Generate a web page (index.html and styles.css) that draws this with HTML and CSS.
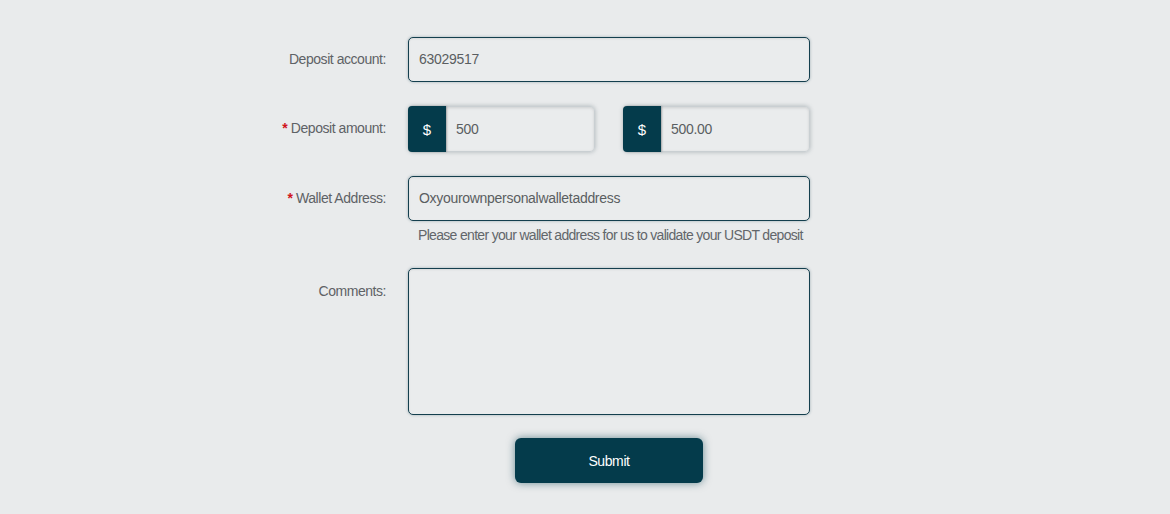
FILE: index.html
```html
<!DOCTYPE html>
<html>
<head>
<meta charset="utf-8">
<link rel="stylesheet" href="styles.css">
</head>
<body>
<div class="page">
  <form class="form">
    <div class="row">
      <label class="label">Deposit account:</label>
      <div class="field">
        <div class="input dark">63029517</div>
      </div>
    </div>
    <div class="row">
      <label class="label"><span class="req">*</span> Deposit amount:</label>
      <div class="field pair">
        <div class="group">
          <span class="addon">$</span>
          <div class="input soft">500</div>
        </div>
        <div class="group">
          <span class="addon">$</span>
          <div class="input soft">500.00</div>
        </div>
      </div>
    </div>
    <div class="row">
      <label class="label"><span class="req">*</span> Wallet Address:</label>
      <div class="field">
        <div class="input dark">Oxyourownpersonalwalletaddress</div>
        <p class="help">Please enter your wallet address for us to validate your USDT deposit</p>
      </div>
    </div>
    <div class="row top">
      <label class="label">Comments:</label>
      <div class="field">
        <div class="input dark area"></div>
      </div>
    </div>
    <div class="actions">
      <button type="button" class="submit">Submit</button>
    </div>
  </form>
</div>
</body>
</html>
```
FILE: styles.css
```css
* { box-sizing: border-box; }
html, body {
  margin: 0;
  background: #e9ebec;
}
body {
  font-family: "Liberation Sans", Arial, sans-serif;
  font-size: 14px;
  color: #5b5f62;
}
.page {
  padding: 37px 0 0 208px;
  height: 514px;
}
.form {
  display: flex;
  flex-direction: column;
  gap: 24px;
  width: 602px;
}
.row {
  display: grid;
  grid-template-columns: 178px 402px;
  column-gap: 22px;
  align-items: start;
}
.label {
  text-align: right;
  line-height: 45px;
  letter-spacing: -0.45px;
  color: #5e6266;
  white-space: nowrap;
}
.row.top .label {
  line-height: 16px;
  padding-top: 15px;
}
.req {
  color: #d0141c;
  font-weight: bold;
}
.input {
  height: 45px;
  line-height: 43px;
  padding: 0 10px;
  letter-spacing: -0.3px;
  color: #5a5e61;
  background: #eaeced;
  border-radius: 5px;
}
.input.dark {
  border: 1.5px solid #143f4e;
  box-shadow: 0 0 3px rgba(20, 63, 78, 0.35), inset 0 1px 2px rgba(0,0,0,0.08);
}
.input.area {
  height: 147px;
}
.pair {
  display: flex;
  gap: 28px;
}
.group {
  display: flex;
  width: 187px;
  height: 46px;
  border-radius: 5px;
  box-shadow: 0 0 4px rgba(60, 80, 90, 0.35);
}
.addon {
  width: 38px;
  flex: none;
  background: #043b4b;
  color: #ffffff;
  display: flex;
  align-items: center;
  justify-content: center;
  border-radius: 4px 0 0 4px;
  font-size: 15px;
  box-shadow: 1px 0 2px rgba(0,0,0,0.25);
  position: relative;
  z-index: 1;
}
.input.soft {
  flex: 1;
  height: 46px;
  line-height: 44px;
  border: 1px solid #c9cfd2;
  border-left: none;
  border-radius: 0 5px 5px 0;
  box-shadow: inset 0 1px 3px rgba(0,0,0,0.12);
}
.help {
  margin: 5px 0 0;
  padding-left: 10px;
  line-height: 18px;
  letter-spacing: -0.68px;
  color: #62666a;
  white-space: nowrap;
}
.actions {
  display: flex;
  justify-content: flex-start;
  padding-left: 307px;
  margin-top: -1px;
}
.submit {
  width: 188px;
  height: 45px;
  border: none;
  border-radius: 6px;
  background: #043b4b;
  color: #ffffff;
  font-family: "Liberation Sans", Arial, sans-serif;
  font-size: 14px;
  letter-spacing: -0.4px;
  box-shadow: 0 0 8px rgba(4, 59, 75, 0.55);
  cursor: pointer;
}
```
